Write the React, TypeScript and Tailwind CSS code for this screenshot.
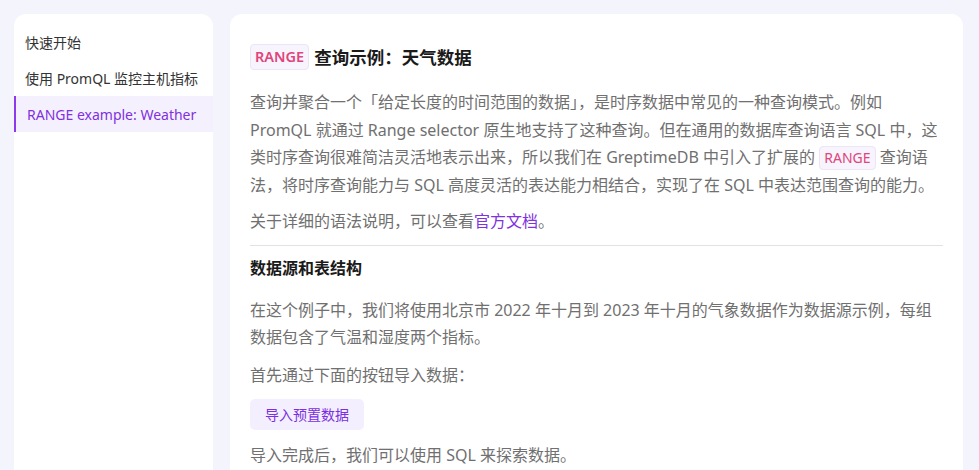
export default function App() {
  const font = { fontFamily: '"Noto Sans", "Noto Sans CJK SC", sans-serif' };
  return (
    <div className="h-[470px] overflow-hidden bg-[#f4f5fc] flex gap-[17px] px-[14px] pt-[14px]" style={font}>
      {/* sidebar */}
      <aside className="w-[199px] shrink-0 bg-white rounded-t-[12px] pt-[10px] text-[14px] text-[#333]">
        <div className="h-[36px] flex items-center px-[11px]">快速开始</div>
        <div className="h-[36px] flex items-center px-[11px]">使用 PromQL 监控主机指标</div>
        <div className="h-[36px] flex items-center pl-[11px] border-l-2 border-[#8b3bea] bg-[#f4f0fe] text-[#8031e0]">
          RANGE example: Weather
        </div>
      </aside>

      {/* main */}
      <main className="w-[733px] shrink-0 bg-white rounded-t-[12px] px-[20px] pt-[30px] text-[16px] text-[#707070]">
        <h1 className="flex items-center gap-[5px] text-[17.5px] font-bold text-[#1a1a1a] h-[26px]">
          <code className="px-[4px] h-[26px] flex items-center rounded-[4px] border border-[#ebe5f6] bg-[#f7f4fd] text-[#e0457b] text-[14.5px] font-semibold" style={font}>
            RANGE
          </code>
          查询示例：天气数据
        </h1>

        <p className="mt-[19px] leading-[27.5px]">
          查询并聚合一个「给定长度的时间范围的数据」，是时序数据中常见的一种查询模式。例如 PromQL 就通过 Range selector
          原生地支持了这种查询。但在通用的数据库查询语言 SQL 中，这类时序查询很难简洁灵活地表示出来，所以我们在 GreptimeDB
          中引入了扩展的{' '}
          <code className="inline-block px-[4px] leading-[22px] rounded-[4px] border border-[#ebe5f6] bg-[#f7f4fd] text-[#e0457b] text-[14px]" style={font}>
            RANGE
          </code>{' '}
          查询语法，将时序查询能力与 SQL 高度灵活的表达能力相结合，实现了在 SQL 中表达范围查询的能力。
        </p>

        <p className="mt-[9px] leading-[27px]">
          关于详细的语法说明，可以查看<a className="text-[#8031e0]">官方文档</a>。
        </p>

        <hr className="mt-[10px] border-[#e2e2e2]" />

        <h2 className="mt-[9px] text-[16px] font-bold text-[#1a1a1a] leading-[26px]">数据源和表结构</h2>

        <p className="mt-[16px] leading-[27px]">
          在这个例子中，我们将使用北京市 2022 年十月到 2023 年十月的气象数据作为数据源示例，每组数据包含了气温和湿度两个指标。
        </p>

        <p className="mt-[11px] leading-[27px]">首先通过下面的按钮导入数据：</p>

        <button className="mt-[10px] h-[31px] w-[114px] rounded-[5px] bg-[#f4effe] text-[14px] text-[#7b2fe0]" style={font}>
          导入预置数据
        </button>

        <p className="mt-[12px] leading-[27px]">导入完成后，我们可以使用 SQL 来探索数据。</p>
      </main>
    </div>
  );
}
